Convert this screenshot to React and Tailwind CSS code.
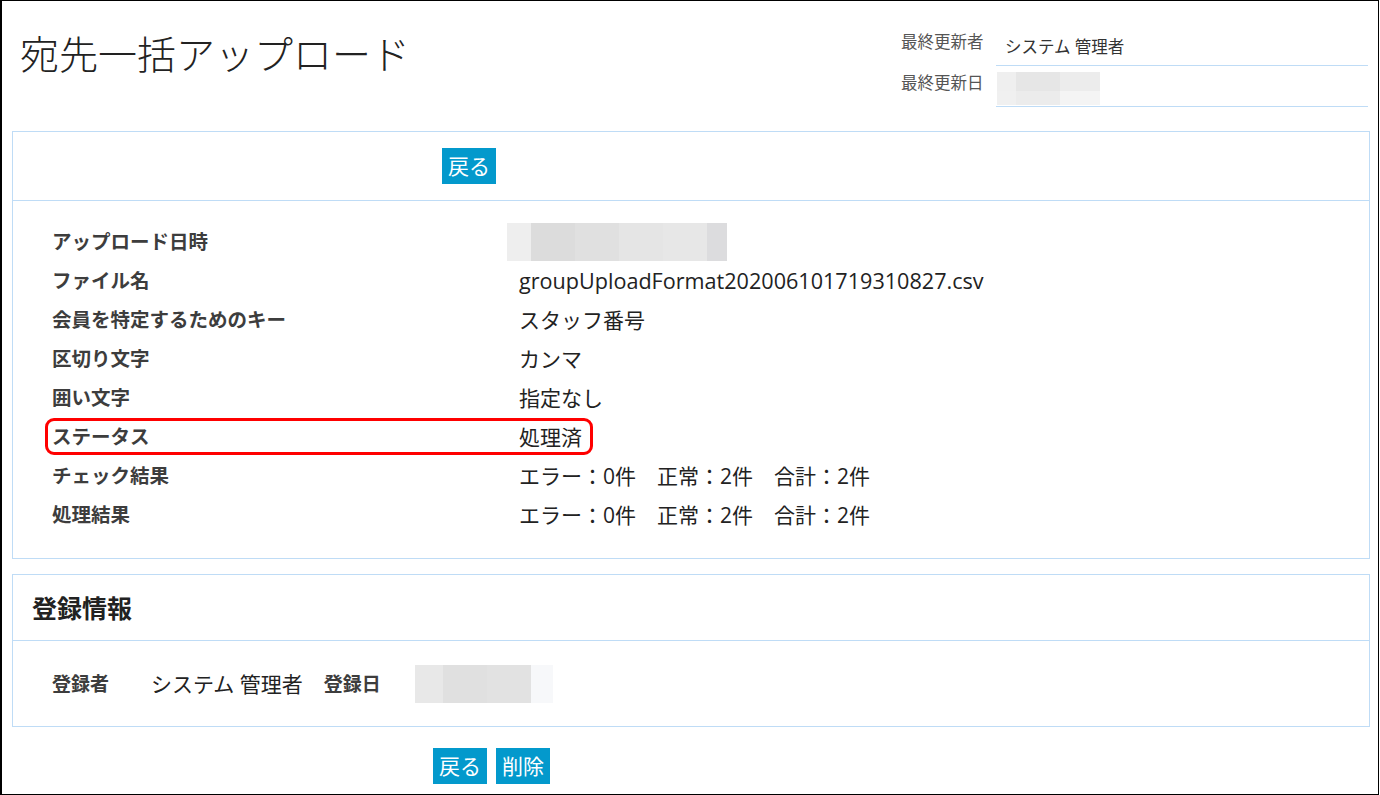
import React from 'react'

// 詳細画面で使うぼかし済みの値（日時など）
function Masked({ blocks, className }) {
  return (
    <div className={'flex ' + className}>
      {blocks.map((b, i) => (
        <div key={i} className="h-full" style={{ width: b[0], background: b[1] }} />
      ))}
    </div>
  )
}

function Button({ children }) {
  return (
    <button
      type="button"
      className="h-[36px] px-[6px] bg-[#0399cc] text-white text-[21px] leading-[36px]"
    >
      {children}
    </button>
  )
}

const rows = [
  { label: 'アップロード日時', masked: true },
  { label: 'ファイル名', value: 'groupUploadFormat20200610171931 0827.csv'.replace(' ', ''), latin: true },
  { label: '会員を特定するためのキー', value: 'スタッフ番号' },
  { label: '区切り文字', value: 'カンマ' },
  { label: '囲い文字', value: '指定なし' },
  { label: 'ステータス', value: '処理済', marked: true },
  { label: 'チェック結果', value: 'エラー：0件　正常：2件　合計：2件' },
  { label: '処理結果', value: 'エラー：0件　正常：2件　合計：2件' }
]

export default function App() {
  return (
    <div className="w-[1380px] h-[795px] bg-white overflow-hidden font-['Open_Sans','Noto_Sans_CJK_JP',sans-serif] text-[#222]">
      <div className="w-[1379px] h-[795px] border-l-2 border-t border-r border-b border-black">
        {/* ヘッダー */}
        <div className="flex justify-between h-[130px]">
          <h1 className="pl-[18px] pt-[29px] text-[39px] leading-[48px] font-light text-[#222]">
            宛先一括アップロード
          </h1>
          <div className="mr-[10px] pt-[24px] w-[467px]">
            <div className="flex">
              <div className="w-[95px] pt-[5px] text-[16.5px] leading-[24px] text-[#555]">最終更新者</div>
              <div className="w-[372px] h-[41px] border-b border-[#bfdcf6] pl-[9px] pt-[12px] text-[16.5px] leading-[20px] text-[#333]">
                システム 管理者
              </div>
            </div>
            <div className="flex">
              <div className="w-[95px] pt-[5px] text-[16.5px] leading-[24px] text-[#555]">最終更新日</div>
              <div className="w-[372px] h-[41px] border-b border-[#bfdcf6] pl-[1px] pt-[6px]">
                <div className="flex flex-col w-[103px] h-[33px]">
                  <Masked
                    className="h-[19px]"
                    blocks={[[19, '#efefef'], [44, '#e6e6e6'], [40, '#ececec']]}
                  />
                  <Masked
                    className="h-[14px]"
                    blocks={[[19, '#f0f0f0'], [44, '#ececec'], [40, '#f4f4f4']]}
                  />
                </div>
              </div>
            </div>
          </div>
        </div>

        {/* アップロード内容 */}
        <div className="ml-[10px] w-[1358px] border border-[#bfdcf6]">
          <div className="h-[69px] flex items-center pl-[429px] border-b border-[#bfdcf6]">
            <Button>戻る</Button>
          </div>
          <div className="pt-[21px] pb-[24px] pl-[39px]">
            {rows.map((r) => (
              <div key={r.label} className="relative flex items-center h-[39px]">
                {r.marked && (
                  <div className="absolute left-[-7px] top-[1px] w-[548px] h-[37px] rounded-[9px] border-[3px] border-[#ff0000]" />
                )}
                <div className="w-[467px] text-[19.5px] font-bold text-[#3d3d3d] leading-[26px]">{r.label}</div>
                {r.masked ? (
                  <Masked
                    className="-ml-[12px] h-[38px]"
                    blocks={[
                      [24, '#eeeeee'],
                      [44, '#dcdcdc'],
                      [44, '#e0e0e0'],
                      [44, '#e5e5e5'],
                      [44, '#e7e7e7'],
                      [20, '#dcdcde']
                    ]}
                  />
                ) : (
                  <div className={(r.latin ? 'text-[21.6px]' : 'text-[21px]') + ' leading-[28px]'}>{r.value}</div>
                )}
              </div>
            ))}
          </div>
        </div>

        {/* 登録情報 */}
        <div className="ml-[10px] mt-[15px] w-[1358px] border border-[#bfdcf6]">
          <div className="h-[66px] flex items-center pl-[19px] border-b border-[#bfdcf6]">
            <h2 className="text-[25px] font-bold leading-[32px] text-[#222]">登録情報</h2>
          </div>
          <div className="h-[85px] flex items-center pl-[39px]">
            <div className="w-[99px] text-[19px] font-bold text-[#3d3d3d] leading-[26px]">登録者</div>
            <div className="text-[21px] leading-[28px] mr-[21px]">システム 管理者</div>
            <div className="text-[19px] font-bold text-[#3d3d3d] leading-[26px] mr-[34px]">登録日</div>
            <Masked
              className="h-[38px]"
              blocks={[[28, '#e8e8e8'], [44, '#e0e0e0'], [44, '#e2e2e2'], [22, '#f7f8fa']]}
            />
          </div>
        </div>

        <div className="flex gap-[9px] ml-[431px] mt-[21px]">
          <Button>戻る</Button>
          <Button>削除</Button>
        </div>
      </div>
    </div>
  )
}
